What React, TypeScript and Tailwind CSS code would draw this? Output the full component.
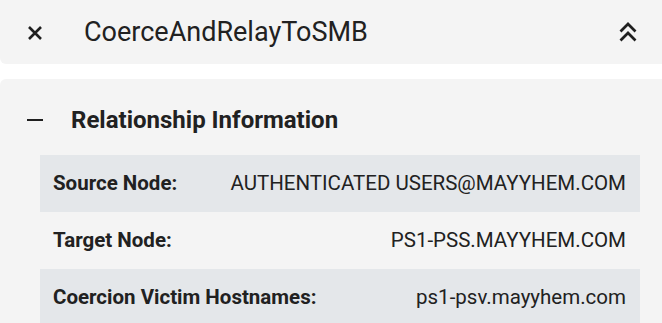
import React from "react";

// ─────────────────────────────────────────
// Icons
// ─────────────────────────────────────────

function CloseIcon() {
  return (
    <svg viewBox="0 0 16 16" className="h-4 w-4" fill="none">
      <path d="M2 2L14 14M14 2L2 14" stroke="#1f1f1f" strokeWidth="2.6" />
    </svg>
  );
}

function DoubleChevronUp() {
  return (
    <svg viewBox="0 0 18 20" className="h-5 w-[18px]" fill="none">
      <path
        d="M1.5 9.5L9 2L16.5 9.5M1.5 18.5L9 11L16.5 18.5"
        stroke="#1f1f1f"
        strokeWidth="2.7"
      />
    </svg>
  );
}

// ─────────────────────────────────────────
// Rows
// ─────────────────────────────────────────

interface Field {
  label: string;
  value: string;
}

const fields: Field[] = [
  { label: "Source Node:", value: "AUTHENTICATED USERS@MAYYHEM.COM" },
  { label: "Target Node:", value: "PS1-PSS.MAYYHEM.COM" },
  { label: "Coercion Victim Hostnames:", value: "ps1-psv.mayyhem.com" },
];

function FieldRow({ field, striped }: { field: Field; striped: boolean }) {
  return (
    <div
      className={`flex h-[57px] items-center justify-between pl-[13px] pr-[14px] ${
        striped ? "bg-[#e4e7ea]" : ""
      }`}
    >
      <span className="text-[20.5px] font-bold text-[#212121]">
        {field.label}
      </span>
      <span className="text-[20.5px] text-[#212121]">{field.value}</span>
    </div>
  );
}

export default function App() {
  return (
    <div className="h-[323px] w-[662px] overflow-hidden bg-white font-['Roboto',sans-serif]">
      <div className="flex h-[64px] w-[670px] items-center rounded-bl-md bg-[#f4f4f4]">
        <div className="ml-[27px] flex pt-[1px]">
          <CloseIcon />
        </div>
        <h1 className="ml-[41px] text-[27px] leading-none text-[#212121]">
          CoerceAndRelayToSMB
        </h1>
        <div className="ml-auto mr-[33px] flex">
          <DoubleChevronUp />
        </div>
      </div>

      <div className="mt-[15px] w-[670px] rounded-tl-md bg-[#f4f4f4] pb-[20px]">
        <div className="flex h-[76px] items-center pt-[6px]">
          <span className="ml-[27px] h-[2.5px] w-4 bg-[#1f1f1f]" />
          <h2 className="ml-[28px] text-[24px] font-bold text-[#212121]">
            Relationship Information
          </h2>
        </div>
        <div className="ml-[40px] w-[600px]">
          {fields.map((f, i) => (
            <FieldRow key={f.label} field={f} striped={i % 2 === 0} />
          ))}
        </div>
      </div>
    </div>
  );
}
